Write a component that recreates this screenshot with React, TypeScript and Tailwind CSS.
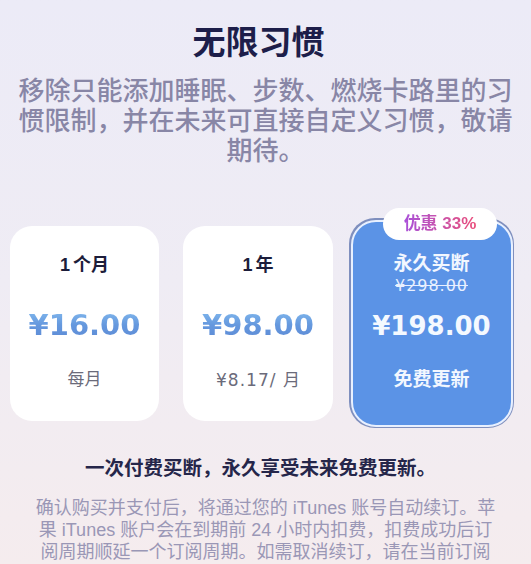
import React from "react";

const cjk = "font-['Liberation_Sans','Noto_Sans_CJK_SC',sans-serif]";
const num = "font-['DejaVu_Sans','Noto_Sans_CJK_SC',sans-serif]";

export default function App() {
  return (
    <div
      className={`w-[531px] h-[564px] overflow-hidden bg-gradient-to-b from-[#ecebf7] via-[#efecf4] to-[#f5ecee] ${cjk}`}
    >
      <h1 className="pt-[24px] pr-[14px] text-center text-[33px] leading-[38px] font-bold text-[#1d1e4a]">
        无限习惯
      </h1>
      <p className="mt-[14px] px-[14px] text-center text-[26px] leading-[30px] font-medium text-[#8886a6]">
        移除只能添加睡眠、步数、燃烧卡路里的习惯限制，并在未来可直接自定义习惯，敬请期待。
      </p>

      <div className="mt-[52px] flex items-center pl-[10px]">
        {/* card 1 */}
        <div className="w-[149px] h-[195px] rounded-[22px] bg-white flex flex-col items-center">
          <div className="pt-[27px] text-[18px] leading-[24px] font-bold text-[#1c1d3a]">
            <span className="mr-[3px]">1</span>个月
          </div>
          <div
            className={`mt-[28px] text-[29px] leading-[40px] font-bold bg-gradient-to-b from-[#8cc4f2] via-[#6598de] to-[#5a86d2] bg-clip-text text-transparent ${num}`}
          >
            ¥16.00
          </div>
          <div className="mt-[23px] text-[17px] leading-[24px] text-[#6b6b7a]">每月</div>
        </div>

        {/* card 2 */}
        <div className="ml-[24px] w-[150px] h-[195px] rounded-[22px] bg-white flex flex-col items-center">
          <div className="pt-[27px] text-[18px] leading-[24px] font-bold text-[#1c1d3a]">
            <span className="mr-[3px]">1</span>年
          </div>
          <div
            className={`mt-[28px] text-[29px] leading-[40px] font-bold bg-gradient-to-b from-[#8cc4f2] via-[#6598de] to-[#5a86d2] bg-clip-text text-transparent ${num}`}
          >
            ¥98.00
          </div>
          <div className="mt-[23px] text-[17px] leading-[24px] text-[#6b6b7a]">
            <span className={`${num} tracking-[0.06em]`}>¥8.17/ </span>月
          </div>
        </div>

        {/* card 3 */}
        <div className="relative ml-[16px] w-[165px] h-[210px] rounded-[26px] bg-[#7f8fbe] p-[1.5px]">
          <div className="h-full w-full rounded-[25px] border-[2.5px] border-[#e8f0ff] bg-[#5b93e6] flex flex-col items-center text-white">
            <div className="pt-[30px] text-[19px] leading-[24px] font-semibold text-[#f2f7ff]">
              永久买断
            </div>
            <div
              className={`text-[16px] leading-[20px] line-through tracking-[0.06em] text-[#e8f0ff] ${num}`}
            >
              ¥298.00
            </div>
            <div className={`mt-[10px] text-[26px] leading-[40px] font-bold text-[#f4f9ff] ${num}`}>
              ¥198.00
            </div>
            <div className="mt-[22px] text-[19px] leading-[24px] font-semibold text-[#f2f7ff]">
              免费更新
            </div>
          </div>
          <div className="absolute left-[34px] top-[-10px] w-[114px] h-[32px] rounded-full bg-white flex items-center justify-center">
            <span className="text-[17px] leading-[20px] font-bold bg-gradient-to-r from-[#a94fd9] to-[#ea4a78] bg-clip-text text-transparent">
              优惠 33%
            </span>
          </div>
        </div>
      </div>

      <div className="mt-[28px] pr-[10px] text-center text-[19.5px] leading-[24px] font-bold text-[#25264a]">
        一次付费买断，永久享受未来免费更新。
      </div>

      <div className="mt-[17px] text-center text-[18px] leading-[22px] text-[#9a97b6]">
        <div>确认购买并支付后，将通过您的 iTunes 账号自动续订。苹</div>
        <div>果 iTunes 账户会在到期前 24 小时内扣费，扣费成功后订</div>
        <div>阅周期顺延一个订阅周期。如需取消续订，请在当前订阅</div>
        <div>周期到期前 24 小时以前，手动在 iTunes 设置管理中关闭</div>
      </div>
    </div>
  );
}
